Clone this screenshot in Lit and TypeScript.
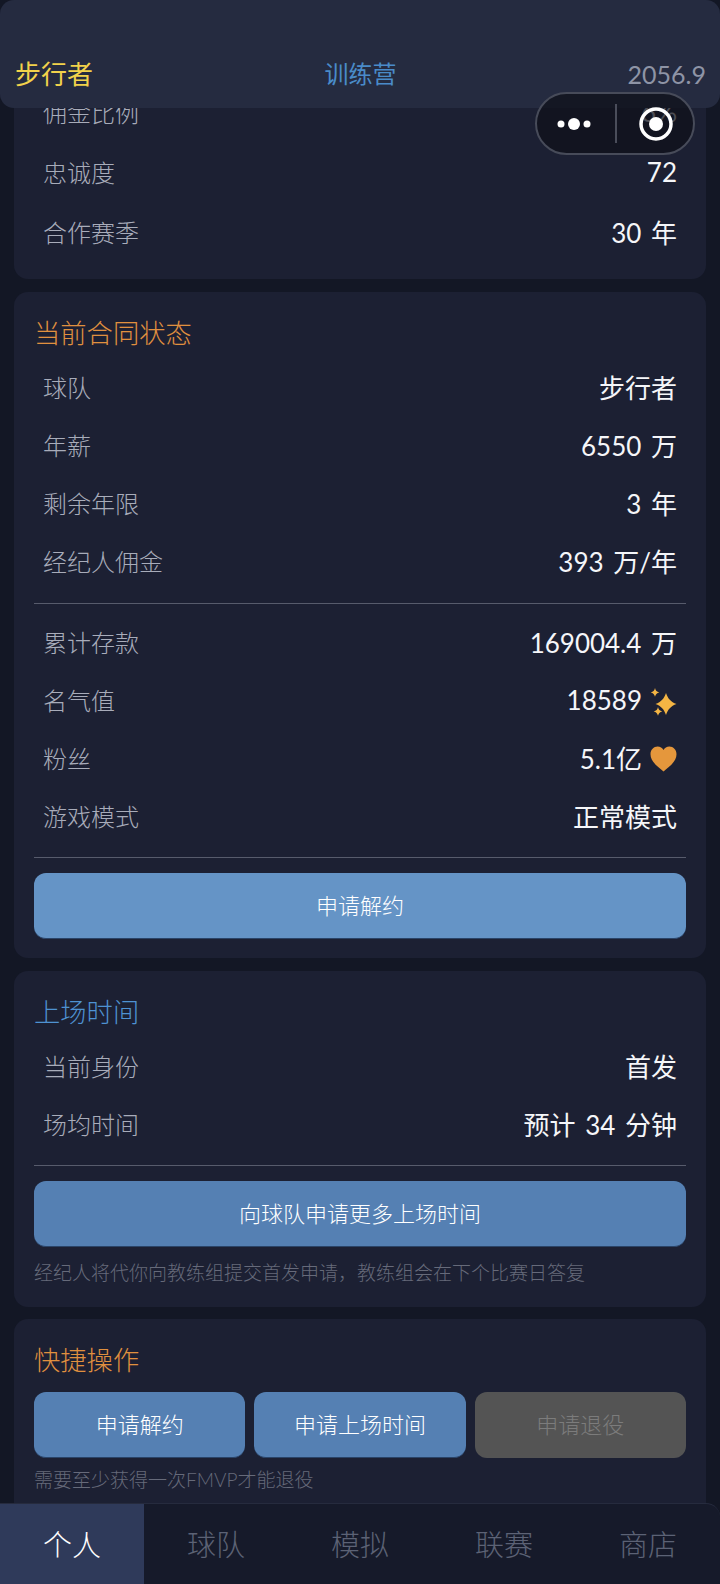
import { LitElement, html, css, svg } from "lit";
import { customElement } from "lit/decorators.js";

const sparkle = svg`<svg class="ico star" viewBox="0 0 27 28" width="27" height="28"><path fill="#f4b544" d="M16 5c1.900 5.800 4.800 8.800 10.500 11C20.800 18.200 17.900 21.200 16 27c-1.900-5.800-4.800-8.800-10.500-11C11.200 13.800 14.100 10.800 16 5z"/><path fill="#f4b544" d="M5 0c.6 2.600 1.700 3.800 4.300 4.400C6.700 5 5.600 6.200 5 8.800 4.400 6.200 3.300 5 .7 4.400 3.300 3.800 4.400 2.600 5 0zM8 19c.6 2.600 1.700 3.800 4.300 4.400-2.600.6-3.700 1.800-4.300 4.400-.6-2.600-1.700-3.800-4.300-4.400C6.300 22.800 7.400 21.600 8 19z"/></svg>`;
const heart = svg`<svg class="ico love" viewBox="0 0 27 26" width="27" height="26"><path fill="#e5973c" d="M13.500 25.500C8 21 .5 15.500.5 8.200.5 3.800 3.800.6 7.600.6c2.600 0 4.700 1.300 5.900 3.500C14.700 1.900 16.800.6 19.400.6c3.800 0 7.100 3.200 7.100 7.600 0 7.300-7.500 12.800-13 17.300z"/></svg>`;

@customElement("app-root")
export class AppRoot extends LitElement {
  static styles = css`
    :host {
      display: block;
      position: relative;
      width: 720px;
      height: 1584px;
      overflow: hidden;
      background: #131725;
      font-family: "Lato", "Noto Sans CJK SC", "Noto Sans", sans-serif;
      font-weight: 300;
      color: #fff;
    }
    .scroll {
      display: flex;
      flex-direction: column;
      gap: 13px;
      padding: 60px 14px 0;
    }
    .card {
      background: #1c2033;
      border-radius: 14px;
      padding: 20px;
    }
    .first { padding: 24px 20px 15px; }
    .contract { padding-bottom: 19px; }
    .title {
      font-size: 26.300px;
      line-height: 35px;
      padding-top: 4px;
      margin-bottom: 9px;
    }
    .title.wide { margin-bottom: 14px; }
    .orange { color: #e0903f; }
    .blue { color: #4f92d2; }
    .row {
      display: flex;
      justify-content: space-between;
      align-items: center;
      height: 58px;
      box-sizing: border-box;
      padding: 0 9px 5px;
    }
    .first .row { height: 60px; }
    .label { font-size: 24px; color: #a8acba; }
    .value {
      font-size: 26px;
      font-weight: 400;
      color: #f5f6f9;
      display: flex;
      align-items: center;
      gap: 8px;
      word-spacing: 3px;
    }
    .ico { display: block; }
    .star { margin-top: 5px; }
    .love { margin-top: 2px; }
    .sep {
      height: 1px;
      background: #575b6c;
      margin: 11px 0;
    }
    .sep.tail { margin: 10px 0 15px; }
    .btn {
      height: 66px;
      border-radius: 12px;
      display: flex;
      align-items: center;
      justify-content: center;
      font-size: 22px;
      color: #fff;
      background: #5580b3;
      box-sizing: border-box;
      border-bottom: 1px solid #2a4468;
      padding-bottom: 4px;
    }
    .btn.light { background: #6594c6; }
    .btn.off { background: #545454; color: #7c7c7c; border-bottom: none; }
    .hint {
      font-size: 19px;
      line-height: 28px;
      color: #666a7a;
      margin-top: 12px;
    }
    .hint.near { margin-top: 8px; }
    .trio {
      display: grid;
      grid-template-columns: repeat(3, 1fr);
      gap: 9px;
    }
    .last { padding-bottom: 120px; margin-top: -1px; }
    .header {
      position: absolute;
      left: 0;
      top: 0;
      right: 0;
      height: 108px;
      box-sizing: border-box;
      background: #252b40;
      border-radius: 14px;
      padding: 51px 15px 0;
      display: grid;
      grid-template-columns: 1fr 1fr 1fr;
      align-items: center;
      align-content: start;
      font-size: 26px;
      font-weight: 400;
      line-height: 46px;
    }
    .team { color: #f2d24b; }
    .camp { color: #4a8bc9; text-align: center; font-size: 24px; padding-left: 1px; }
    .money { color: #8e94a6; text-align: right; font-size: 25px; margin-right: -1px; }
    .capsule {
      position: absolute;
      left: 535px;
      top: 92px;
      width: 160px;
      height: 63px;
      box-sizing: border-box;
      border: 2px solid #474b59;
      border-radius: 32px;
      background: rgba(15, 16, 25, 0.74);
      display: flex;
      align-items: center;
    }
    .capsule .part {
      flex: 1;
      display: flex;
      align-items: center;
      justify-content: center;
    }
    .capsule .dots { padding-right: 4px; }
    .capsule .eye { padding-left: 3px; }
    .capsule .bar { width: 2px; height: 39px; background: #4a4d5a; }
    .tabs {
      position: absolute;
      left: 0;
      right: 0;
      bottom: 0;
      height: 81px;
      box-sizing: border-box;
      background: #161a2a;
      border-top: 1px solid #262b3e;
      border-radius: 0 14px 0 0;
      display: grid;
      grid-template-columns: repeat(5, 1fr);
      overflow: hidden;
    }
    .tab {
      display: flex;
      align-items: center;
      justify-content: center;
      font-size: 29px;
      color: #5c6275;
      padding-bottom: 2px;
    }
    .tab.on { background: #2f3a5a; color: #fff; }
  `;

  private row(label: string, value: unknown) {
    return html`<div class="row"><span class="label">${label}</span><span class="value">${value}</span></div>`;
  }

  render() {
    return html`
      <div class="scroll">
        <section class="card first">
          ${this.row("佣金比例", "6%")}
          ${this.row("忠诚度", "72")}
          ${this.row("合作赛季", "30 年")}
        </section>
        <section class="card contract">
          <div class="title orange">当前合同状态</div>
          ${this.row("球队", "步行者")}
          ${this.row("年薪", "6550 万")}
          ${this.row("剩余年限", "3 年")}
          ${this.row("经纪人佣金", "393 万/年")}
          <div class="sep"></div>
          ${this.row("累计存款", "169004.4 万")}
          ${this.row("名气值", html`18589 ${sparkle}`)}
          ${this.row("粉丝", html`5.1亿 ${heart}`)}
          ${this.row("游戏模式", "正常模式")}
          <div class="sep tail"></div>
          <div class="btn light">申请解约</div>
        </section>
        <section class="card">
          <div class="title blue">上场时间</div>
          ${this.row("当前身份", "首发")}
          ${this.row("场均时间", "预计 34 分钟")}
          <div class="sep tail"></div>
          <div class="btn">向球队申请更多上场时间</div>
          <div class="hint">经纪人将代你向教练组提交首发申请，教练组会在下个比赛日答复</div>
        </section>
        <section class="card last">
          <div class="title orange wide">快捷操作</div>
          <div class="trio">
            <div class="btn">申请解约</div>
            <div class="btn">申请上场时间</div>
            <div class="btn off">申请退役</div>
          </div>
          <div class="hint near">需要至少获得一次FMVP才能退役</div>
        </section>
      </div>
      <header class="header">
        <span class="team">步行者</span>
        <span class="camp">训练营</span>
        <span class="money">2056.9</span>
      </header>
      <div class="capsule">
        <div class="part dots">
          <svg width="50" height="20" viewBox="0 0 50 20"><circle cx="12" cy="10" r="3.500" fill="#fff"/><circle cx="25" cy="10" r="6" fill="#fff"/><circle cx="38" cy="10" r="3.500" fill="#fff"/></svg>
        </div>
        <div class="bar"></div>
        <div class="part eye">
          <svg width="36" height="36" viewBox="0 0 36 36"><circle cx="18" cy="18" r="15" fill="none" stroke="#fff" stroke-width="3.500"/><circle cx="18" cy="18" r="7" fill="#fff"/></svg>
        </div>
      </div>
      <nav class="tabs">
        <div class="tab on">个人</div>
        <div class="tab">球队</div>
        <div class="tab">模拟</div>
        <div class="tab">联赛</div>
        <div class="tab">商店</div>
      </nav>
    `;
  }
}
